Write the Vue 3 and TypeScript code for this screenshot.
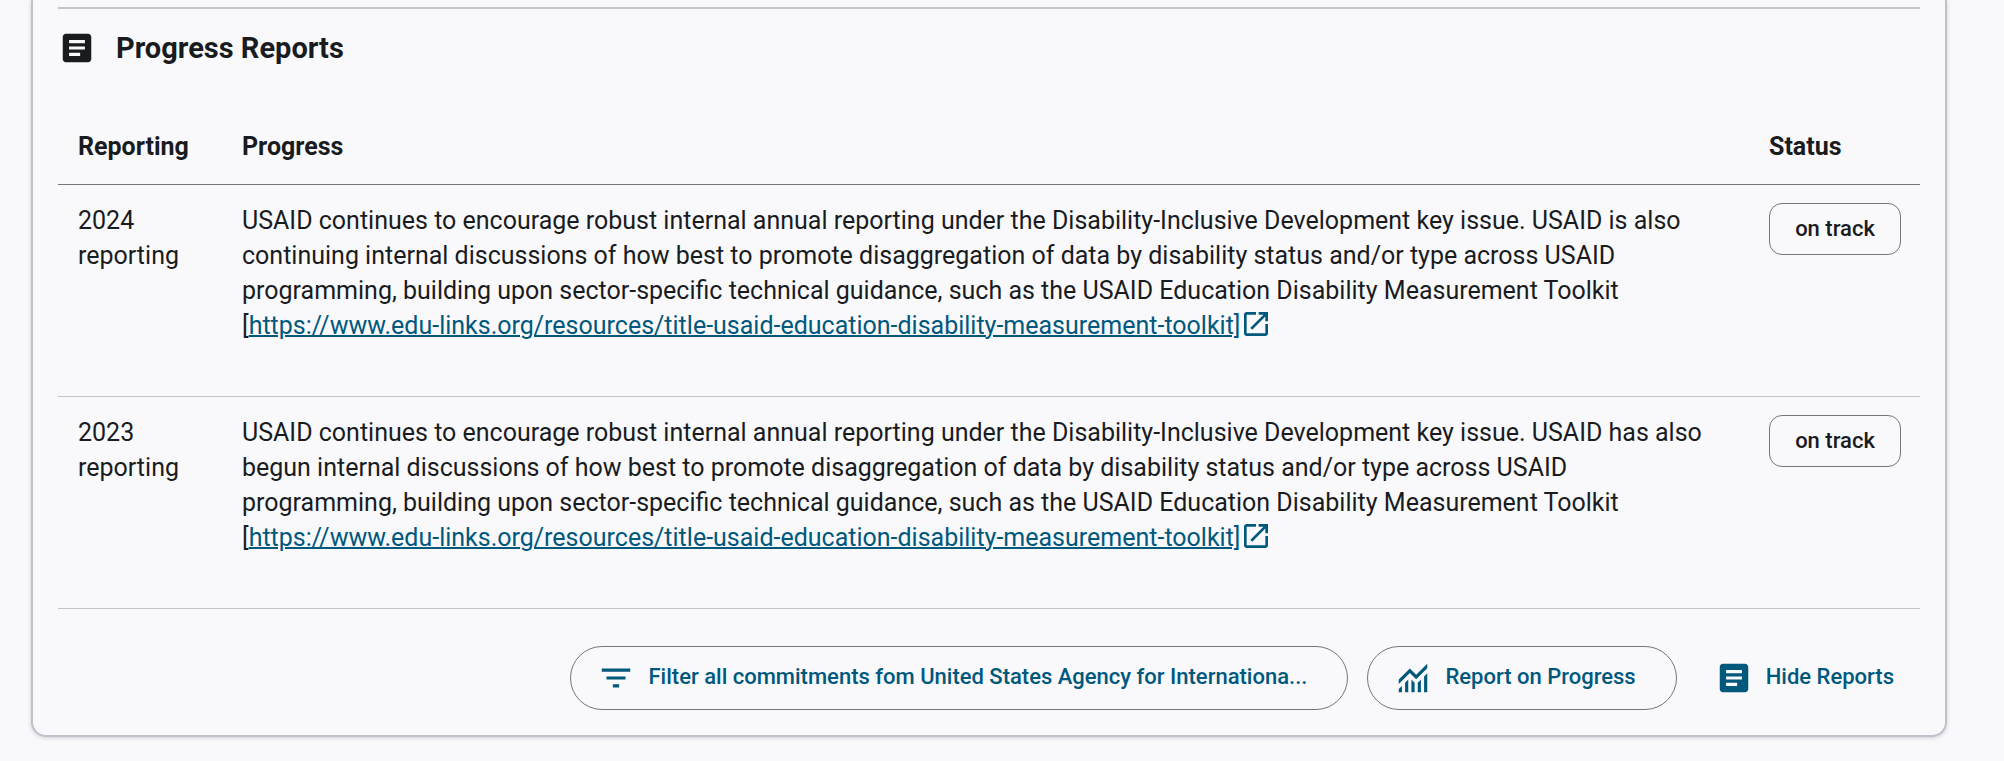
<script setup lang="ts">
interface Report {
  year: number
  text: string
  status: string
}

const tail =
  'of how best to promote disaggregation of data by disability status and/or type across USAID programming, building upon sector-specific technical guidance, such as the USAID Education Disability Measurement Toolkit'
const intro =
  'USAID continues to encourage robust internal annual reporting under the Disability-Inclusive Development key issue.'

const url = 'https://www.edu-links.org/resources/title-usaid-education-disability-measurement-toolkit'

const reports: Report[] = [
  { year: 2024, text: `${intro} USAID is also continuing internal discussions ${tail}`, status: 'on track' },
  { year: 2023, text: `${intro} USAID has also begun internal discussions ${tail}`, status: 'on track' },
]
</script>

<template>
  <main class="card">
    <section class="reports">
      <h2 class="title">
        <svg class="icon" viewBox="0 0 24 24" aria-hidden="true">
          <path d="M19 3H5c-1.1 0-2 .9-2 2v14c0 1.1.9 2 2 2h14c1.1 0 2-.9 2-2V5c0-1.1-.9-2-2-2zm-5 14H7v-2h7v2zm3-4H7v-2h10v2zm0-4H7V7h10v2z" />
        </svg>
        Progress Reports
      </h2>
      <table class="table">
        <thead>
          <tr>
            <th class="col-year" scope="col">Reporting</th>
            <th scope="col">Progress</th>
            <th class="col-status" scope="col">Status</th>
          </tr>
        </thead>
        <tbody>
          <tr v-for="report in reports" :key="report.year">
            <td>{{ report.year }} reporting</td>
            <td>
              <p class="text">
                {{ report.text }}
                <span class="source">[<a class="link" :href="url">{{ url }}]<svg class="external" viewBox="0 0 24 24" aria-hidden="true">
                  <path d="M19 19H5V5h7V3H5c-1.11 0-2 .9-2 2v14c0 1.1.89 2 2 2h14c1.1 0 2-.9 2-2v-7h-2v7zM14 3v2h3.59l-9.83 9.83 1.41 1.41L19 6.41V10h2V3h-7z" />
                </svg></a></span>
              </p>
            </td>
            <td><button class="chip" type="button">{{ report.status }}</button></td>
          </tr>
        </tbody>
      </table>
    </section>
    <footer class="actions">
      <button class="pill" type="button">
        <svg class="icon" viewBox="0 0 24 24" aria-hidden="true">
          <path d="M10 18h4v-2h-4v2zM3 6v2h18V6H3zm3 7h12v-2H6v2z" />
        </svg>
        <span class="label">Filter all commitments fom United States Agency for Internationa...</span>
      </button>
      <button class="pill" type="button">
        <svg class="icon" viewBox="0 0 24 24" aria-hidden="true">
          <path d="M3 21v-2l2-2v4H3zm4 0v-6l2-2v8H7zm4 0v-8l2 2.03V21h-2zm4 0v-5.97l2-2V21h-2zm4 0V11l2-2v12h-2zM3 15.83V13l7-7 4 4 7-7v2.83l-7 7-4-4-7 7z" />
        </svg>
        <span class="label">Report on Progress</span>
      </button>
      <button class="pill plain" type="button">
        <svg class="icon" viewBox="0 0 24 24" aria-hidden="true">
          <path d="M19 3H5c-1.1 0-2 .9-2 2v14c0 1.1.9 2 2 2h14c1.1 0 2-.9 2-2V5c0-1.1-.9-2-2-2zm-5 14H7v-2h7v2zm3-4H7v-2h10v2zm0-4H7V7h10v2z" />
        </svg>
        <span class="label">Hide Reports</span>
      </button>
    </footer>
  </main>
</template>

<style>
body {
  background: #f9f9fc;
}
</style>

<style scoped>
.card {
  margin: 0 57px 24px 31px;
  padding: 7px 25px 25px;
  border: 2px solid #bfc1cb;
  border-top: 0;
  border-radius: 0 0 15px 15px;
  box-shadow: 0 1px 4px rgba(40, 40, 70, 0.2);
  background: #f9f9fc;
  color: #191c1e;
  font: 400 25px/35px Roboto, sans-serif;
}

.reports {
  border-top: 2px solid #c0c7cd;
}

.title {
  display: flex;
  align-items: center;
  gap: 20px;
  height: 78px;
  margin: 0 0 22px;
  font-size: 29px;
  font-weight: 700;
}

.icon {
  flex: none;
  width: 38px;
  height: 38px;
  fill: currentColor;
}

.table {
  width: 100%;
  border-collapse: separate;
  border-spacing: 0;
  table-layout: fixed;
}

.col-year {
  width: 164px;
}

.col-status {
  width: 171px;
}

th,
td {
  box-sizing: border-box;
  padding: 18px 19px 19px 20px;
  text-align: left;
  vertical-align: top;
  border-bottom: 1px solid #c2c6cb;
}

th {
  height: 76px;
  padding-top: 20px;
  border-bottom-color: #70787d;
  font-weight: 700;
}

.text {
  margin: 0 0 34px;
  padding-right: 12px;
}

.source {
  white-space: nowrap;
}

.link {
  color: #00587c;
  text-decoration-thickness: 2px;
}

.external {
  width: 32px;
  height: 32px;
  vertical-align: text-bottom;
  fill: currentColor;
}

.chip,
.pill {
  border: 1px solid #70787d;
  background: transparent;
  color: inherit;
  font: 500 22px/31px Roboto, sans-serif;
  white-space: nowrap;
  cursor: pointer;
}

.chip {
  display: block;
  width: 132px;
  height: 52px;
  padding: 0 0 2px;
  border-radius: 13px;
}

.actions {
  display: flex;
  justify-content: flex-end;
  gap: 19px;
  margin-top: 37px;
}

.pill {
  display: flex;
  align-items: center;
  gap: 13px;
  height: 64px;
  padding: 0 40px 0 26px;
  border-radius: 32px;
  color: #00587c;
}

.label {
  padding-bottom: 3px;
}

.plain {
  border-color: transparent;
  padding-right: 25px;
  padding-left: 18px;
}
</style>
